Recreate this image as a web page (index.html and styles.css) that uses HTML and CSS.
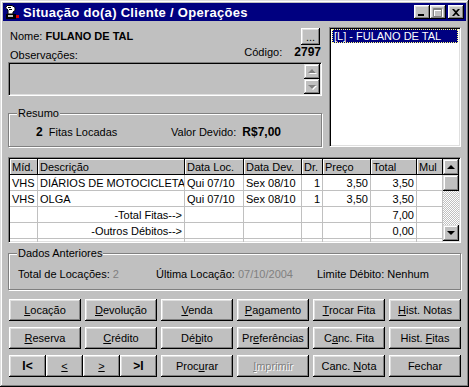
FILE: index.html
```html
<!DOCTYPE html>
<html lang="pt-br">
<head>
    <meta charset="UTF-8">
    <title>Situação do(a) Cliente / Operações</title>
    <link rel="stylesheet" href="styles.css">
</head>
<body>

<div class="window">
    <div class="titlebar">
        <svg class="app-icon" viewBox="0 0 16 16">
            <path d="M3 1.5h5l3 2v3l-2 1.5v2H4V6L1.5 4z" fill="#fff" stroke="#000"/>
            <path d="M4 3.5h3M5 5.5h3" stroke="#000"/>
            <rect x="2" y="10" width="10" height="5" fill="#000"/>
            <rect x="4" y="11" width="5" height="2" fill="#c0c0c0"/>
            <rect x="12" y="11" width="3" height="3" fill="#e00000"/>
        </svg>
        <span class="title">Situação do(a) Cliente / Operações</span>
        <div class="title-buttons">
            <span class="tbtn"><svg width="8" height="7"><rect x="0" y="5" width="6" height="2" fill="#000"/></svg></span>
            <span class="tbtn"><svg width="10" height="9"><path d="M1.5 1.5h8v8h-8z M1 2.5h9" stroke="#fff" fill="none"/><path d="M0.5 0.5h8v8h-8z M0 1.5h9" stroke="#808080" fill="none"/></svg></span>
            <span class="tbtn close"><svg width="8" height="7"><path d="M0 0h2l2 2 2-2h2L5 3.5 8 7H6L4 5 2 7H0l3-3.5z" fill="#000"/></svg></span>
        </div>
    </div>

    <div class="client">
        <div class="top">
            <div class="left">
                <div class="name-row">
                    <span>Nome: <b>FULANO DE TAL</b></span>
                    <button class="btn dots">...</button>
                </div>
                <div class="obs-row">
                    <span>Observações:</span>
                    <span class="codigo">Código: <b>2797</b></span>
                </div>
                <div class="memo">
                    <div class="memo-scroll">
                        <span class="sb-btn"><span class="arrow up off"></span></span>
                        <span class="sb-btn"><span class="arrow down off"></span></span>
                    </div>
                </div>
                <fieldset class="group">
                    <legend>Resumo</legend>
                    <div class="group-body resumo">
                        <span><b>2</b>&nbsp; Fitas Locadas</span>
                        <span>Valor Devido: &nbsp;<b>R$7,00</b></span>
                    </div>
                </fieldset>
            </div>
            <div class="listbox">
                <div class="item">[L] - FULANO DE TAL</div>
            </div>
        </div>

        <div class="grid">
            <table>
                <colgroup>
                    <col style="width:28px"><col style="width:147px"><col style="width:59px"><col style="width:58px">
                    <col style="width:21px"><col style="width:48px"><col style="width:46px"><col style="width:26px">
                </colgroup>
                <tr>
                    <th>Míd.</th><th>Descrição</th><th>Data Loc.</th><th>Data Dev.</th><th>Dr.</th><th>Preço</th><th>Total</th><th>Mul</th>
                </tr>
                <tr>
                    <td>VHS</td><td>DIÁRIOS DE MOTOCICLETA</td><td>Qui 07/10</td><td>Sex 08/10</td><td class="r">1</td><td class="r">3,50</td><td class="r">3,50</td><td></td>
                </tr>
                <tr>
                    <td>VHS</td><td>OLGA</td><td>Qui 07/10</td><td>Sex 08/10</td><td class="r">1</td><td class="r">3,50</td><td class="r">3,50</td><td></td>
                </tr>
                <tr>
                    <td></td><td class="r">-Total Fitas--&gt;</td><td></td><td></td><td></td><td></td><td class="r">7,00</td><td></td>
                </tr>
                <tr>
                    <td></td><td class="r">-Outros Débitos--&gt;</td><td></td><td></td><td></td><td></td><td class="r">0,00</td><td></td>
                </tr>
                <tr>
                    <td></td><td></td><td></td><td></td><td></td><td></td><td></td><td></td>
                </tr>
            </table>
            <div class="vscroll">
                <span class="sb-btn big"><span class="arrow up"></span></span>
                <span class="sb-btn big"></span>
                <span class="sb-track"></span>
                <span class="sb-btn big"><span class="arrow down"></span></span>
            </div>
        </div>

        <fieldset class="group dados">
            <legend>Dados Anteriores</legend>
            <div class="group-body anteriores">
                <span>Total de Locações: <span class="dim">2</span></span>
                <span>Última Locação: <span class="dim">07/10/2004</span></span>
                <span>Limite Débito: Nenhum</span>
            </div>
        </fieldset>

        <div class="buttons">
            <button class="btn"><u>L</u>ocação</button>
            <button class="btn"><u>D</u>evolução</button>
            <button class="btn"><u>V</u>enda</button>
            <button class="btn"><u>P</u>agamento</button>
            <button class="btn"><u>T</u>rocar Fita</button>
            <button class="btn"><u>H</u>ist. Notas</button>

            <button class="btn"><u>R</u>eserva</button>
            <button class="btn"><u>C</u>rédito</button>
            <button class="btn">Dé<u>b</u>ito</button>
            <button class="btn">Pr<u>e</u>ferências</button>
            <button class="btn">C<u>a</u>nc. Fita</button>
            <button class="btn">Hist. <u>F</u>itas</button>

            <div class="nav">
                <button class="btn"><b>I&lt;</b></button>
                <button class="btn"><u>&lt;</u></button>
                <button class="btn"><u>&gt;</u></button>
                <button class="btn"><b>&gt;I</b></button>
            </div>
            <button class="btn">Proc<u>u</u>rar</button>
            <button class="btn off"><u>I</u>mprimir</button>
            <button class="btn">Canc. <u>N</u>ota</button>
            <button class="btn">Fechar</button>
        </div>
    </div>
</div>

</body>
</html>
```

FILE: styles.css
```css
* { box-sizing: border-box; }
body { margin: 0; background: #c0c0c0; font: 11px "Liberation Sans", Arial, sans-serif; color: #000; }

.window { width: 469px; height: 387px; padding: 3px; background: #c0c0c0; display: flex; flex-direction: column;
    box-shadow: inset -1px -1px #000, inset 1px 1px #dfdfdf, inset -2px -2px #808080, inset 2px 2px #fff; }

/* barra de titulo */
.titlebar { height: 18px; background: #000080; color: #fff; display: flex; align-items: center; padding: 0 2px 0 1px; }
.app-icon { width: 16px; height: 16px; margin-right: 3px; flex: none; }
.title { flex: 1; font-weight: bold; font-size: 13px; letter-spacing: 0.3px; white-space: nowrap; }
.title-buttons { display: flex; }
.tbtn { width: 16px; height: 14px; background: #c0c0c0; display: flex; align-items: center; justify-content: center;
    box-shadow: inset -1px -1px #000, inset 1px 1px #fff, inset -2px -2px #808080, inset 2px 2px #dfdfdf; }
.tbtn svg { display: block; }
.tbtn.close { margin-left: 2px; }

.client { flex: 1; padding: 6px 5px 7px; display: flex; flex-direction: column; }

/* botoes e campos */
.btn { font: inherit; color: #000; background: #c0c0c0; border: none; padding: 0; height: 22px; cursor: pointer;
    box-shadow: inset -1px -1px #000, inset 1px 1px #fff, inset -2px -2px #808080, inset 2px 2px #dfdfdf; }
.btn.off { color: #808080; text-shadow: 1px 1px #fff; }

.top { display: flex; gap: 7px; height: 120px; }
.left { width: 314px; display: flex; flex-direction: column; }
.name-row { display: flex; justify-content: space-between; align-items: center; height: 17px; margin-top: 1px; padding: 0 2px; }
.name-row > span { padding-bottom: 1px; }
.dots { width: 19px; height: 17px; line-height: 10px; }
.obs-row { display: flex; justify-content: space-between; align-items: flex-end; height: 17px; padding: 0 1px 0 2px; line-height: 13px; }
.codigo { padding-bottom: 3px; }
.codigo b { margin-left: 9px; font-size: 12px; }

.memo { height: 34px; background: #c0c0c0; display: flex; justify-content: flex-end; padding: 1px;
    border: 1px solid; border-color: #808080 #fff #fff #808080; box-shadow: inset 1px 1px #000, inset -1px -1px #dfdfdf; }
.memo-scroll { display: flex; flex-direction: column; width: 16px; }
.memo-scroll .sb-btn { height: 15px; }

.sb-btn { width: 16px; height: 16px; background: #c0c0c0; display: flex; align-items: center; justify-content: center; flex: none;
    box-shadow: inset -1px -1px #000, inset 1px 1px #dfdfdf, inset -2px -2px #808080, inset 2px 2px #fff; }
.arrow { width: 0; height: 0; border-left: 4px solid transparent; border-right: 4px solid transparent; }
.arrow.up { border-bottom: 4px solid #000; margin-top: -1px; }
.arrow.down { border-top: 4px solid #000; }
.arrow.up.off { border-bottom-color: #808080; filter: drop-shadow(1px 1px 0 #fff); }
.arrow.down.off { border-top-color: #808080; filter: drop-shadow(1px 1px 0 #fff); }

/* caixas de grupo */
.group { margin: 12px 0 0; padding: 0 0 1px; min-width: 0; border: 1px solid #808080; box-shadow: inset 1px 1px #fff, 1px 1px #fff; }
.group legend { margin-left: 8px; padding: 0 1px; line-height: 11px; background: #c0c0c0; }
.group-body { height: 26px; display: grid; align-items: center; }
.resumo { grid-template-columns: 135px 1fr; padding-left: 27px; padding-bottom: 1px; }
.resumo b { font-size: 12px; }

.listbox { width: 132px; background: #fff; padding: 1px 2px;
    border: 1px solid; border-color: #808080 #fff #fff #808080; box-shadow: inset 1px 1px #000, inset -1px -1px #dfdfdf; }
.item { height: 14px; line-height: 12px; padding-left: 1px; background: #000080; color: #fff; border: 1px dotted #ffff80; white-space: nowrap; }

/* grade */
.grid { margin-top: 10px; height: 86px; display: flex; overflow: hidden; background: #fff; padding: 1px;
    border: 1px solid; border-color: #808080 #fff #fff #808080; box-shadow: inset 1px 1px #000, inset -1px -1px #dfdfdf; }
table { width: 433px; flex: none; border-collapse: separate; border-spacing: 0; table-layout: fixed; align-self: flex-start; }
tr { height: 16px; }
th, td { padding: 0 2px; white-space: nowrap; overflow: hidden; text-overflow: clip; font-weight: normal; text-align: left; }
th { background: #c0c0c0; border-right: 1px solid #000; border-bottom: 1px solid #000; box-shadow: inset 1px 1px #fff; }
td { border-right: 1px solid #c0c0c0; border-bottom: 1px solid #c0c0c0; }
td.r { text-align: right; }
.vscroll { width: 16px; display: flex; flex-direction: column; }
.sb-track { flex: 1; background: repeating-conic-gradient(#c0c0c0 0 25%, #fff 0 50%) 0 0 / 2px 2px; }

.dados { margin-top: 5px; }
.dados .group-body { height: 29px; }
.anteriores { grid-template-columns: 138px 161px 1fr; padding-left: 9px; }
.dim { color: #808080; }

.buttons { margin: 9px 0 0 1px; display: grid; grid-template-columns: repeat(6, 72px); column-gap: 4px; row-gap: 6px; }
.nav { grid-column: span 2; display: grid; grid-template-columns: repeat(4, 1fr); }
.nav b { font-size: 12px; }
```
